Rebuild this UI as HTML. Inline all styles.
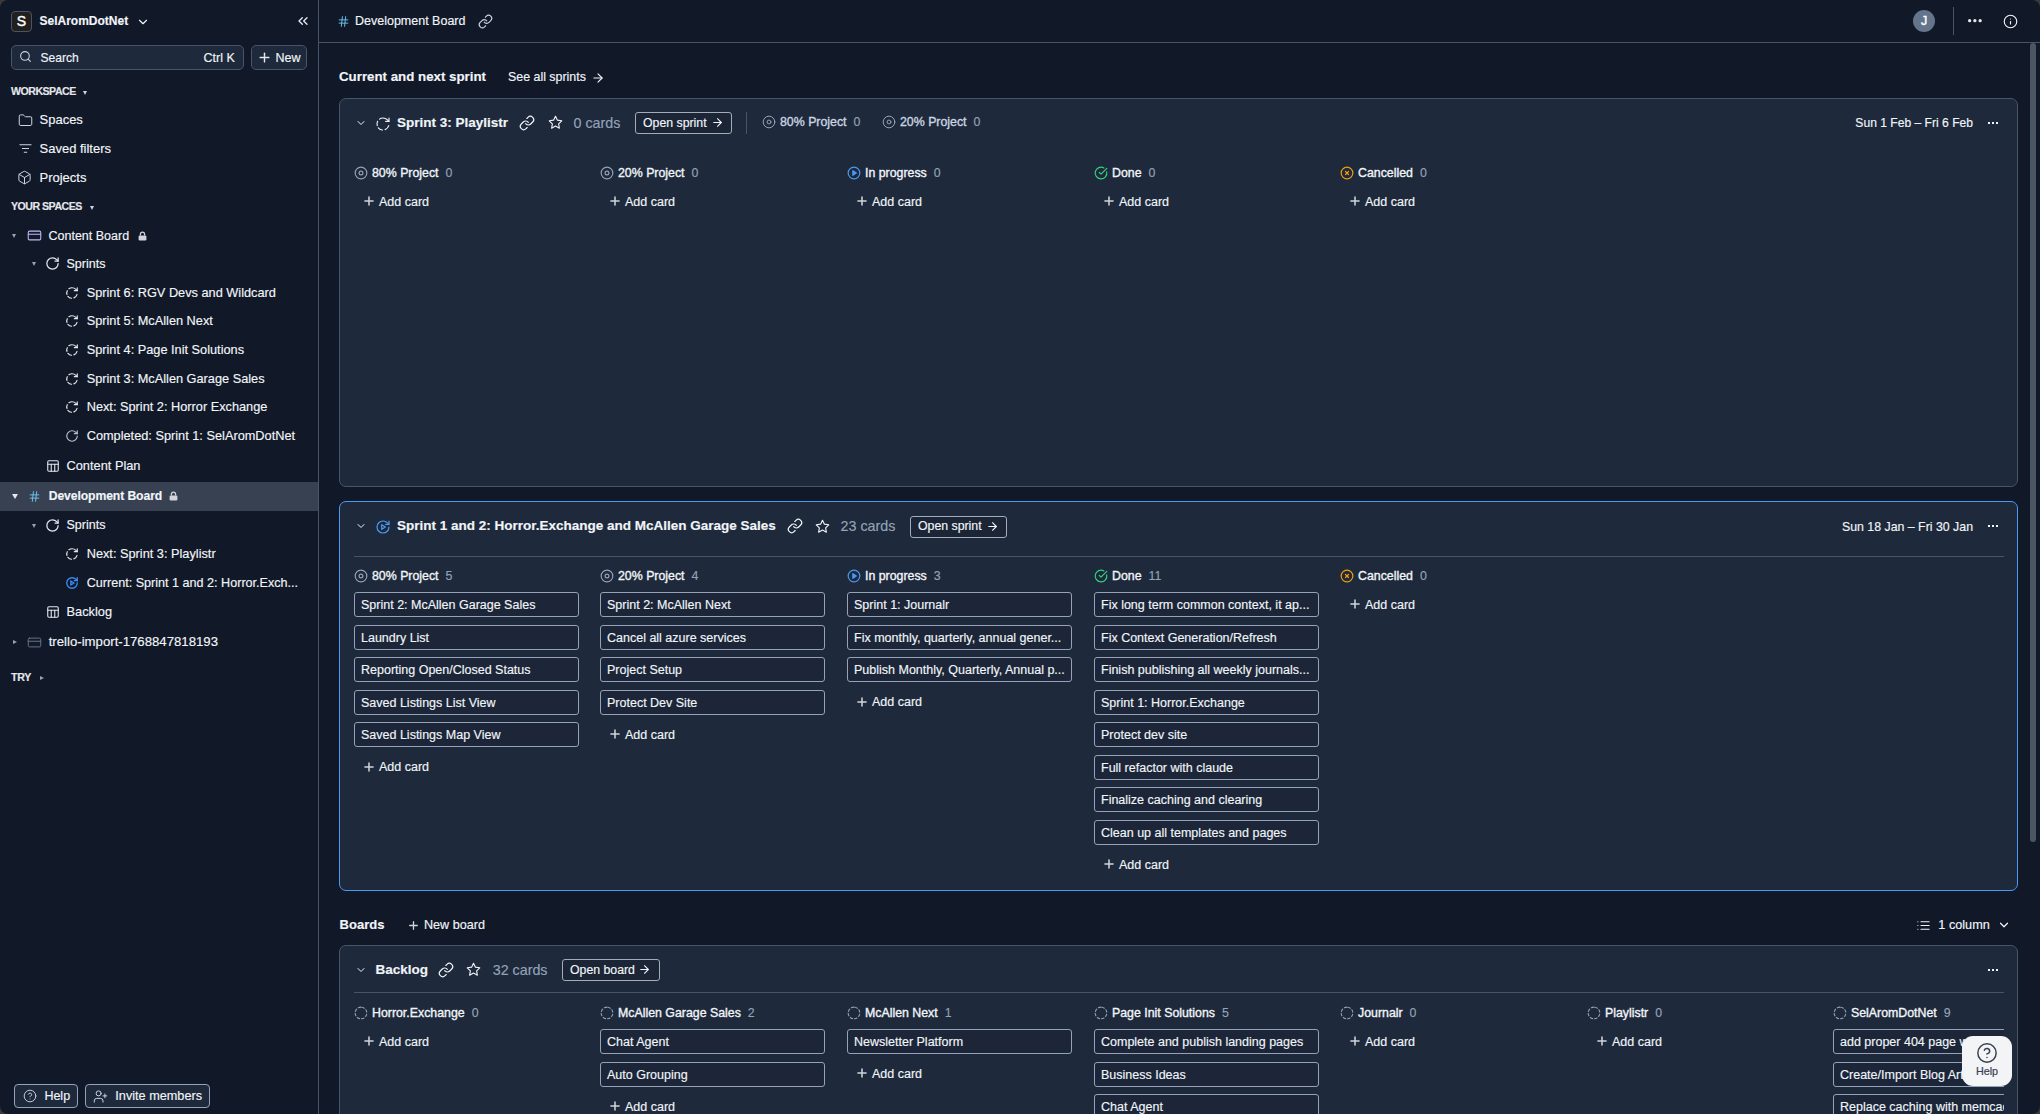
<!DOCTYPE html>
<html><head><meta charset="utf-8"><style>
html{margin:0;padding:0;background:#3a3a3a}body{margin:0;padding:0;border-radius:8px;}
body{width:2040px;height:1114px;overflow:hidden;background:#111827;position:relative;font-family:"Liberation Sans",sans-serif;}
.t{position:absolute;line-height:20px;white-space:nowrap;-webkit-text-stroke-width:0.15px;}
.b{position:absolute;box-sizing:border-box;}
.i{position:absolute;overflow:visible;}
.card{position:absolute;height:25px;box-sizing:border-box;border:1px solid #94a3b8;border-radius:3px;background:#1c2638;color:#f1f5f9;font-size:12.5px;line-height:24px;padding-left:6px;white-space:nowrap;overflow:hidden;-webkit-text-stroke-width:0.15px;}
.btn{position:absolute;box-sizing:border-box;border:1px solid #a3acb9;border-radius:3px;background:#1b2535}
.hd{font-size:12.35px;color:#f1f5f9;font-weight:400;-webkit-text-stroke-width:0.35px;}
.cnt{color:#94a3b8;font-weight:400;margin-left:7px;-webkit-text-stroke-width:0.15px;}
</style></head><body>
<div class="b" style="left:318px;top:0;width:1px;height:1114px;background:#475569"></div>
<div class="b" style="left:11px;top:11px;width:21px;height:21px;background:#221f1e;border:1px solid #475569;border-radius:4px;"></div>
<div class="t" style="left:11px;top:10.8px;font-size:14px;font-weight:400;color:#ffffff;width:21px;text-align:center;-webkit-text-stroke-width:0.4px">S</div>
<div class="t" style="left:39.5px;top:11.0px;font-size:12px;font-weight:700;color:#f1f5f9;">SelAromDotNet</div>
<svg class="i" style="left:135.5px;top:14.5px;color:#f1f5f9;" width="14" height="14" viewBox="0 0 24 24" fill="none" stroke="#f1f5f9" stroke-width="2" stroke-linecap="round" stroke-linejoin="round"><path d="m6 9 6 6 6-6"/></svg>
<svg class="i" style="left:294.5px;top:13.0px;color:#e2e8f0;" width="16" height="16" viewBox="0 0 24 24" fill="none" stroke="#e2e8f0" stroke-width="2" stroke-linecap="round" stroke-linejoin="round"><path d="m11 17-5-5 5-5"/><path d="m18 17-5-5 5-5"/></svg>
<div class="b" style="left:11px;top:45px;width:233px;height:25px;background:#1e293b;border:1px solid #475569;border-radius:5px;"></div>
<svg class="i" style="left:19px;top:50.0px;color:#cbd5e1;" width="13" height="13" viewBox="0 0 24 24" fill="none" stroke="#cbd5e1" stroke-width="2" stroke-linecap="round" stroke-linejoin="round"><circle cx="11" cy="11" r="8"/><path d="m21 21-4.3-4.3"/></svg>
<div class="t" style="left:40.5px;top:47.5px;font-size:12.1px;font-weight:400;color:#f1f5f9;">Search</div>
<div class="t" style="left:203.5px;top:47.5px;font-size:12.5px;font-weight:400;color:#f1f5f9;">Ctrl K</div>
<div class="b" style="left:251px;top:45px;width:56px;height:25px;background:#1e293b;border:1px solid #475569;border-radius:5px;"></div>
<svg class="i" style="left:257px;top:50.0px;color:#e5e7eb;" width="15" height="15" viewBox="0 0 24 24" fill="none" stroke="#e5e7eb" stroke-width="2.3" stroke-linecap="round" stroke-linejoin="round"><path d="M5 12h14"/><path d="M12 5v14"/></svg>
<div class="t" style="left:275.6px;top:47.5px;font-size:12.5px;font-weight:400;color:#f1f5f9;">New</div>
<div class="t" style="left:11px;top:81.0px;font-size:10.6px;font-weight:700;color:#e5e7eb;letter-spacing:-0.5px">WORKSPACE</div>
<div class="b" style="left:82.5px;top:90.5px;width:0;height:0;border-left:2.5px solid transparent;border-right:2.5px solid transparent;border-top:4px solid #cbd5e1"></div>
<svg class="i" style="left:17.5px;top:113.0px;color:#cbd5e1;" width="15" height="15" viewBox="0 0 24 24" fill="none" stroke="#cbd5e1" stroke-width="1.6" stroke-linecap="round" stroke-linejoin="round"><path d="M20 20a2 2 0 0 0 2-2V8a2 2 0 0 0-2-2h-7.9a2 2 0 0 1-1.69-.9L9.6 3.9A2 2 0 0 0 7.93 3H4a2 2 0 0 0-2 2v13a2 2 0 0 0 2 2Z"/></svg>
<div class="t" style="left:39.5px;top:109.5px;font-size:13px;font-weight:400;color:#f1f5f9;">Spaces</div>
<svg class="i" style="left:17.5px;top:141.0px;color:#cbd5e1;" width="15" height="15" viewBox="0 0 24 24" fill="none" stroke="#cbd5e1" stroke-width="1.6" stroke-linecap="round" stroke-linejoin="round"><path d="M3 6h18"/><path d="M7 12h10"/><path d="M10 18h4"/></svg>
<div class="t" style="left:39.5px;top:138.5px;font-size:13px;font-weight:400;color:#f1f5f9;">Saved filters</div>
<svg class="i" style="left:17px;top:170.0px;color:#cbd5e1;" width="15" height="15" viewBox="0 0 24 24" fill="none" stroke="#cbd5e1" stroke-width="1.6" stroke-linecap="round" stroke-linejoin="round"><path d="M21 8a2 2 0 0 0-1-1.73l-7-4a2 2 0 0 0-2 0l-7 4A2 2 0 0 0 3 8v8a2 2 0 0 0 1 1.73l7 4a2 2 0 0 0 2 0l7-4A2 2 0 0 0 21 16Z"/><path d="m3.3 7 8.7 5 8.7-5"/><path d="M12 22V12"/></svg>
<div class="t" style="left:39.5px;top:167.5px;font-size:13px;font-weight:400;color:#f1f5f9;">Projects</div>
<div class="t" style="left:11px;top:196.0px;font-size:10.6px;font-weight:700;color:#e5e7eb;letter-spacing:-0.5px">YOUR SPACES</div>
<div class="b" style="left:90px;top:205.5px;width:0;height:0;border-left:2.5px solid transparent;border-right:2.5px solid transparent;border-top:4px solid #cbd5e1"></div>
<div class="b" style="left:12px;top:234.0px;width:0;height:0;border-left:2.5px solid transparent;border-right:2.5px solid transparent;border-top:4px solid #9ca3af"></div>
<svg class="i" style="left:26.5px;top:228.0px;color:#c4b5fd;" width="15" height="15" viewBox="0 0 24 24" fill="none" stroke="#c4b5fd" stroke-width="1.7" stroke-linecap="round" stroke-linejoin="round"><rect width="20" height="14" x="2" y="5" rx="2"/><line x1="2" x2="22" y1="10" y2="10"/></svg>
<div class="t" style="left:48.5px;top:225.5px;font-size:12.5px;font-weight:400;color:#f1f5f9;">Content Board</div>
<svg class="i" style="left:138px;top:230.5px" width="9" height="10" viewBox="0 0 9 10"><path d="M2.4 4.6V3.2a2.1 2.1 0 0 1 4.2 0V4.6" fill="none" stroke="#d1d5db" stroke-width="1.2"/><rect x="0.6" y="4.4" width="7.8" height="5" rx="1.2" fill="#d1d5db"/></svg>
<div class="b" style="left:32px;top:262.0px;width:0;height:0;border-left:2.5px solid transparent;border-right:2.5px solid transparent;border-top:4px solid #9ca3af"></div>
<svg class="i" style="left:45px;top:256.0px;color:#e2e8f0;" width="15" height="15" viewBox="0 0 24 24" fill="none" stroke="#e2e8f0" stroke-width="2" stroke-linecap="round" stroke-linejoin="round"><path d="M21 12a9 9 0 1 1-9-9c2.52 0 4.93 1 6.74 2.74L21 8"/><path d="M21 3v5h-5"/></svg>
<div class="t" style="left:66.5px;top:253.5px;font-size:12.5px;font-weight:400;color:#f1f5f9;">Sprints</div>
<svg class="i" style="left:64.8px;top:285.5px;color:#e2e8f0;" width="14" height="14" viewBox="0 0 24 24" fill="none" stroke="#e2e8f0" stroke-width="2" stroke-linecap="round" stroke-linejoin="round"><path d="M20.65 14.48A9 9 0 0 1 15.23 20.40M11.22 20.97A9 9 0 0 1 5.01 17.66M3.31 14.33A9 9 0 0 1 3.91 8.05M6.71 4.72A9 9 0 0 1 12.00 3.00c2.52 0 4.93 1 6.74 2.74L21 8"/><path d="M21 3v5h-5"/></svg>
<div class="t" style="left:86.7px;top:282.5px;font-size:12.75px;font-weight:400;color:#f1f5f9;">Sprint 6: RGV Devs and Wildcard</div>
<svg class="i" style="left:64.8px;top:314.0px;color:#e2e8f0;" width="14" height="14" viewBox="0 0 24 24" fill="none" stroke="#e2e8f0" stroke-width="2" stroke-linecap="round" stroke-linejoin="round"><path d="M20.65 14.48A9 9 0 0 1 15.23 20.40M11.22 20.97A9 9 0 0 1 5.01 17.66M3.31 14.33A9 9 0 0 1 3.91 8.05M6.71 4.72A9 9 0 0 1 12.00 3.00c2.52 0 4.93 1 6.74 2.74L21 8"/><path d="M21 3v5h-5"/></svg>
<div class="t" style="left:86.7px;top:311.0px;font-size:12.75px;font-weight:400;color:#f1f5f9;">Sprint 5: McAllen Next</div>
<svg class="i" style="left:64.8px;top:343.0px;color:#e2e8f0;" width="14" height="14" viewBox="0 0 24 24" fill="none" stroke="#e2e8f0" stroke-width="2" stroke-linecap="round" stroke-linejoin="round"><path d="M20.65 14.48A9 9 0 0 1 15.23 20.40M11.22 20.97A9 9 0 0 1 5.01 17.66M3.31 14.33A9 9 0 0 1 3.91 8.05M6.71 4.72A9 9 0 0 1 12.00 3.00c2.52 0 4.93 1 6.74 2.74L21 8"/><path d="M21 3v5h-5"/></svg>
<div class="t" style="left:86.7px;top:340.0px;font-size:12.75px;font-weight:400;color:#f1f5f9;">Sprint 4: Page Init Solutions</div>
<svg class="i" style="left:64.8px;top:371.5px;color:#e2e8f0;" width="14" height="14" viewBox="0 0 24 24" fill="none" stroke="#e2e8f0" stroke-width="2" stroke-linecap="round" stroke-linejoin="round"><path d="M20.65 14.48A9 9 0 0 1 15.23 20.40M11.22 20.97A9 9 0 0 1 5.01 17.66M3.31 14.33A9 9 0 0 1 3.91 8.05M6.71 4.72A9 9 0 0 1 12.00 3.00c2.52 0 4.93 1 6.74 2.74L21 8"/><path d="M21 3v5h-5"/></svg>
<div class="t" style="left:86.7px;top:368.5px;font-size:12.75px;font-weight:400;color:#f1f5f9;">Sprint 3: McAllen Garage Sales</div>
<svg class="i" style="left:64.8px;top:400.0px;color:#e2e8f0;" width="14" height="14" viewBox="0 0 24 24" fill="none" stroke="#e2e8f0" stroke-width="2" stroke-linecap="round" stroke-linejoin="round"><path d="M20.65 14.48A9 9 0 0 1 15.23 20.40M11.22 20.97A9 9 0 0 1 5.01 17.66M3.31 14.33A9 9 0 0 1 3.91 8.05M6.71 4.72A9 9 0 0 1 12.00 3.00c2.52 0 4.93 1 6.74 2.74L21 8"/><path d="M21 3v5h-5"/></svg>
<div class="t" style="left:86.7px;top:397.0px;font-size:12.75px;font-weight:400;color:#f1f5f9;">Next: Sprint 2: Horror Exchange</div>
<svg class="i" style="left:64.8px;top:429.0px;color:#b8c0cc;" width="14" height="14" viewBox="0 0 24 24" fill="none" stroke="#b8c0cc" stroke-width="2" stroke-linecap="round" stroke-linejoin="round"><path d="M21 12a9 9 0 1 1-9-9c2.52 0 4.93 1 6.74 2.74L21 8"/><path d="M21 3v5h-5"/></svg>
<div class="t" style="left:86.7px;top:426.0px;font-size:12.75px;font-weight:400;color:#f1f5f9;">Completed: Sprint 1: SelAromDotNet</div>
<svg class="i" style="left:45.5px;top:459.0px;color:#e2e8f0;" width="14" height="14" viewBox="0 0 24 24" fill="none" stroke="#e2e8f0" stroke-width="1.9" stroke-linecap="round" stroke-linejoin="round"><rect width="18" height="18" x="3" y="3" rx="2"/><path d="M3 9h18"/><path d="M9 9v12"/><path d="M15 9v12"/></svg>
<div class="t" style="left:66.5px;top:456.0px;font-size:12.8px;font-weight:400;color:#f1f5f9;">Content Plan</div>
<div class="b" style="left:0px;top:482px;width:318px;height:29px;background:#374151;border-radius:0px;"></div>
<div class="b" style="left:11.5px;top:494.25px;width:0;height:0;border-left:3.5px solid transparent;border-right:3.5px solid transparent;border-top:5.5px solid #e2e8f0"></div>
<svg class="i" style="left:27.5px;top:489.5px;color:#6ec8f5;" width="13" height="13" viewBox="0 0 24 24" fill="none" stroke="#6ec8f5" stroke-width="1.7" stroke-linecap="round" stroke-linejoin="round"><line x1="4" x2="20" y1="9" y2="9"/><line x1="4" x2="20" y1="15" y2="15"/><line x1="10" x2="8" y1="3" y2="21"/><line x1="16" x2="14" y1="3" y2="21"/></svg>
<div class="t" style="left:48.7px;top:485.5px;font-size:12.2px;font-weight:700;color:#f1f5f9;letter-spacing:-0.1px">Development Board</div>
<svg class="i" style="left:168.5px;top:491px" width="9" height="10" viewBox="0 0 9 10"><path d="M2.4 4.6V3.2a2.1 2.1 0 0 1 4.2 0V4.6" fill="none" stroke="#d1d5db" stroke-width="1.2"/><rect x="0.6" y="4.4" width="7.8" height="5" rx="1.2" fill="#d1d5db"/></svg>
<div class="b" style="left:31.5px;top:523.5px;width:0;height:0;border-left:2.5px solid transparent;border-right:2.5px solid transparent;border-top:4px solid #9ca3af"></div>
<svg class="i" style="left:45px;top:517.5px;color:#e2e8f0;" width="15" height="15" viewBox="0 0 24 24" fill="none" stroke="#e2e8f0" stroke-width="2" stroke-linecap="round" stroke-linejoin="round"><path d="M21 12a9 9 0 1 1-9-9c2.52 0 4.93 1 6.74 2.74L21 8"/><path d="M21 3v5h-5"/></svg>
<div class="t" style="left:66.5px;top:515.0px;font-size:12.5px;font-weight:400;color:#f1f5f9;">Sprints</div>
<svg class="i" style="left:64.8px;top:547.0px;color:#e2e8f0;" width="14" height="14" viewBox="0 0 24 24" fill="none" stroke="#e2e8f0" stroke-width="2" stroke-linecap="round" stroke-linejoin="round"><path d="M20.65 14.48A9 9 0 0 1 15.23 20.40M11.22 20.97A9 9 0 0 1 5.01 17.66M3.31 14.33A9 9 0 0 1 3.91 8.05M6.71 4.72A9 9 0 0 1 12.00 3.00c2.52 0 4.93 1 6.74 2.74L21 8"/><path d="M21 3v5h-5"/></svg>
<div class="t" style="left:86.7px;top:544.0px;font-size:12.75px;font-weight:400;color:#f1f5f9;">Next: Sprint 3: Playlistr</div>
<svg class="i" style="left:64.8px;top:576.0px;color:#3b8cf5;" width="14" height="14" viewBox="0 0 24 24" fill="none" stroke="#3b8cf5" stroke-width="2.3" stroke-linecap="round" stroke-linejoin="round"><path d="M21 12a9 9 0 1 1-9-9c2.52 0 4.93 1 6.74 2.74L21 8"/><path d="M21 3v5h-5"/><path d="M10 8.5v7l5.5-3.5z" /></svg>
<div class="t" style="left:86.7px;top:573.0px;font-size:12.6px;font-weight:400;color:#f1f5f9;width:212px;white-space:nowrap;overflow:hidden">Current: Sprint 1 and 2: Horror.Exch...</div>
<svg class="i" style="left:45.5px;top:605.0px;color:#e2e8f0;" width="14" height="14" viewBox="0 0 24 24" fill="none" stroke="#e2e8f0" stroke-width="1.9" stroke-linecap="round" stroke-linejoin="round"><rect width="18" height="18" x="3" y="3" rx="2"/><path d="M3 9h18"/><path d="M9 9v12"/><path d="M15 9v12"/></svg>
<div class="t" style="left:66.5px;top:602.0px;font-size:12.8px;font-weight:400;color:#f1f5f9;">Backlog</div>
<div class="b" style="left:12.5px;top:639.5px;width:0;height:0;border-top:2.5px solid transparent;border-bottom:2.5px solid transparent;border-left:4px solid #9ca3af"></div>
<svg class="i" style="left:26.5px;top:634.5px;color:#64748b;" width="15" height="15" viewBox="0 0 24 24" fill="none" stroke="#64748b" stroke-width="1.6" stroke-linecap="round" stroke-linejoin="round"><rect width="20" height="14" x="2" y="5" rx="2"/><line x1="2" x2="22" y1="10" y2="10"/></svg>
<div class="t" style="left:48.7px;top:632.0px;font-size:13.2px;font-weight:400;color:#f1f5f9;">trello-import-1768847818193</div>
<div class="t" style="left:11px;top:667.0px;font-size:10.6px;font-weight:700;color:#e5e7eb;letter-spacing:-0.3px">TRY</div>
<div class="b" style="left:39.5px;top:675.5px;width:0;height:0;border-top:2.5px solid transparent;border-bottom:2.5px solid transparent;border-left:4px solid #9ca3af"></div>
<div class="b" style="left:14px;top:1084px;width:64px;height:24px;background:#1e293b;border:1px solid #94a3b8;border-radius:4px;"></div>
<svg class="i" style="left:22.5px;top:1089.0px;color:#cbd5e1;" width="14" height="14" viewBox="0 0 24 24" fill="none" stroke="#cbd5e1" stroke-width="1.6" stroke-linecap="round" stroke-linejoin="round"><circle cx="12" cy="12" r="10"/><path d="M9.09 9a3 3 0 0 1 5.83 1c0 2-3 3-3 3"/><path d="M12 17h.01"/></svg>
<div class="t" style="left:44.4px;top:1086.0px;font-size:12.5px;font-weight:400;color:#f1f5f9;">Help</div>
<div class="b" style="left:85px;top:1084px;width:125px;height:24px;background:#1e293b;border:1px solid #94a3b8;border-radius:4px;"></div>
<svg class="i" style="left:92.5px;top:1088.5px;color:#cbd5e1;" width="15" height="15" viewBox="0 0 24 24" fill="none" stroke="#cbd5e1" stroke-width="1.6" stroke-linecap="round" stroke-linejoin="round"><path d="M16 21v-2a4 4 0 0 0-4-4H6a4 4 0 0 0-4 4v2"/><circle cx="9" cy="7" r="4"/><line x1="19" x2="19" y1="8" y2="14"/><line x1="22" x2="16" y1="11" y2="11"/></svg>
<div class="t" style="left:115.3px;top:1086.0px;font-size:12.7px;font-weight:400;color:#f1f5f9;">Invite members</div>
<div class="b" style="left:319px;top:42px;width:1721px;height:1px;background:#475569"></div>
<svg class="i" style="left:336.5px;top:14.5px;color:#6ec8f5;" width="13" height="13" viewBox="0 0 24 24" fill="none" stroke="#6ec8f5" stroke-width="1.7" stroke-linecap="round" stroke-linejoin="round"><line x1="4" x2="20" y1="9" y2="9"/><line x1="4" x2="20" y1="15" y2="15"/><line x1="10" x2="8" y1="3" y2="21"/><line x1="16" x2="14" y1="3" y2="21"/></svg>
<div class="t" style="left:355px;top:11.0px;font-size:12.5px;font-weight:400;color:#f1f5f9;">Development Board</div>
<svg class="i" style="left:477.5px;top:13.5px;color:#cbd5e1;" width="15" height="15" viewBox="0 0 24 24" fill="none" stroke="#cbd5e1" stroke-width="1.8" stroke-linecap="round" stroke-linejoin="round"><path d="M10 13a5 5 0 0 0 7.54.54l3-3a5 5 0 0 0-7.07-7.07l-1.72 1.71"/><path d="M14 11a5 5 0 0 0-7.54-.54l-3 3a5 5 0 0 0 7.07 7.07l1.71-1.71"/></svg>
<div class="b" style="left:1913px;top:10px;width:22px;height:22px;border-radius:50%;background:#64748b"></div>
<div class="t" style="left:1913px;top:11.0px;font-size:12.5px;font-weight:400;color:#ffffff;width:22px;text-align:center;-webkit-text-stroke-width:0.4px">J</div>
<div class="b" style="left:1953px;top:7px;width:1px;height:28px;background:#475569"></div>
<svg class="i" style="left:1968.1px;top:19.25px" width="13.8" height="3.3" viewBox="0 0 13.8 3.3"><circle cx="1.65" cy="1.65" r="1.65" fill="#e5e7eb"/><circle cx="6.9" cy="1.65" r="1.65" fill="#e5e7eb"/><circle cx="12.15" cy="1.65" r="1.65" fill="#e5e7eb"/></svg>
<svg class="i" style="left:2003.3px;top:13.5px;color:#f1f5f9;" width="15" height="15" viewBox="0 0 24 24" fill="none" stroke="#f1f5f9" stroke-width="1.8" stroke-linecap="round" stroke-linejoin="round"><circle cx="12" cy="12" r="10"/><path d="M12 16v-4"/><path d="M12 8h.01"/></svg>
<div class="b" style="left:2030px;top:43px;width:6px;height:799px;border-radius:3px;background:#4b5563"></div>
<div class="t" style="left:339px;top:67.0px;font-size:13.3px;font-weight:700;color:#f1f5f9;">Current and next sprint</div>
<div class="t" style="left:508px;top:67.0px;font-size:12.4px;font-weight:400;color:#f1f5f9;">See all sprints</div>
<svg class="i" style="left:590.5px;top:70.5px;color:#f1f5f9;" width="14" height="14" viewBox="0 0 24 24" fill="none" stroke="#f1f5f9" stroke-width="2" stroke-linecap="round" stroke-linejoin="round"><path d="M5 12h14"/><path d="m12 5 7 7-7 7"/></svg>
<div class="b" style="left:339px;top:98px;width:1679px;height:389px;background:#1e293b;border:1px solid #475569;border-radius:7px;"></div>
<svg class="i" style="left:355px;top:116.5px;color:#f1f5f9;" width="12" height="12" viewBox="0 0 24 24" fill="none" stroke="#f1f5f9" stroke-width="2" stroke-linecap="round" stroke-linejoin="round"><path d="m6 9 6 6 6-6"/></svg>
<svg class="i" style="left:375px;top:115.5px;color:#f1f5f9;" width="16" height="16" viewBox="0 0 24 24" fill="none" stroke="#f1f5f9" stroke-width="1.7" stroke-linecap="round" stroke-linejoin="round"><path d="M20.65 14.48A9 9 0 0 1 15.23 20.40M11.22 20.97A9 9 0 0 1 5.01 17.66M3.31 14.33A9 9 0 0 1 3.91 8.05M6.71 4.72A9 9 0 0 1 12.00 3.00c2.52 0 4.93 1 6.74 2.74L21 8"/><path d="M21 3v5h-5"/></svg>
<div class="t" style="left:397px;top:112.5px;font-size:13.5px;font-weight:700;color:#f1f5f9;">Sprint 3: Playlistr</div>
<svg class="i" style="left:519px;top:114.5px;color:#f1f5f9;" width="16" height="16" viewBox="0 0 24 24" fill="none" stroke="#f1f5f9" stroke-width="1.8" stroke-linecap="round" stroke-linejoin="round"><path d="M10 13a5 5 0 0 0 7.54.54l3-3a5 5 0 0 0-7.07-7.07l-1.72 1.71"/><path d="M14 11a5 5 0 0 0-7.54-.54l-3 3a5 5 0 0 0 7.07 7.07l1.71-1.71"/></svg>
<svg class="i" style="left:547.5px;top:115.0px;color:#f1f5f9;" width="15" height="15" viewBox="0 0 24 24" fill="none" stroke="#f1f5f9" stroke-width="1.8" stroke-linecap="round" stroke-linejoin="round"><polygon points="12 2 15.09 8.26 22 9.27 17 14.14 18.18 21.02 12 17.77 5.82 21.02 7 14.14 2 9.27 8.91 8.26 12 2"/></svg>
<div class="t" style="left:573.5px;top:112.5px;font-size:14.3px;font-weight:400;color:#94a3b8;">0 cards</div>
<div class="btn" style="left:635px;top:112px;width:97px;height:22px"></div>
<div class="t" style="left:643px;top:112.5px;font-size:12.3px;font-weight:400;color:#f1f5f9;">Open sprint</div>
<svg class="i" style="left:711px;top:116.0px;color:#f1f5f9;" width="13" height="13" viewBox="0 0 24 24" fill="none" stroke="#f1f5f9" stroke-width="2" stroke-linecap="round" stroke-linejoin="round"><path d="M5 12h14"/><path d="m12 5 7 7-7 7"/></svg>
<div class="b" style="left:746px;top:112px;width:1px;height:22px;background:#475569"></div>
<svg class="i" style="left:761.5px;top:115.0px;color:#94a3b8;" width="14" height="14" viewBox="0 0 24 24" fill="none" stroke="#94a3b8" stroke-width="1.7" stroke-linecap="round" stroke-linejoin="round"><circle cx="12" cy="12" r="10"/><circle cx="12" cy="12" r="3.3"/></svg>
<div class="t hd" style="left:780px;top:112px;color:#cbd5e1">80% Project<span class="cnt">0</span></div>
<svg class="i" style="left:881.5px;top:115.0px;color:#94a3b8;" width="14" height="14" viewBox="0 0 24 24" fill="none" stroke="#94a3b8" stroke-width="1.7" stroke-linecap="round" stroke-linejoin="round"><circle cx="12" cy="12" r="10"/><circle cx="12" cy="12" r="3.3"/></svg>
<div class="t hd" style="left:900px;top:112px;color:#cbd5e1">20% Project<span class="cnt">0</span></div>
<div class="t" style="left:1855px;top:113.3px;font-size:12.1px;font-weight:400;color:#f1f5f9;left:auto;right:67px">Sun 1 Feb – Fri 6 Feb</div>
<div class="b" style="left:1988px;top:122px;width:2px;height:2px;background:#f1f5f9"></div>
<div class="b" style="left:1992px;top:122px;width:2px;height:2px;background:#f1f5f9"></div>
<div class="b" style="left:1996px;top:122px;width:2px;height:2px;background:#f1f5f9"></div>
<svg class="i" style="left:353.5px;top:165.6px;color:#94a3b8;" width="14" height="14" viewBox="0 0 24 24" fill="none" stroke="#94a3b8" stroke-width="2.0" stroke-linecap="round" stroke-linejoin="round"><circle cx="12" cy="12" r="10"/><circle cx="12" cy="12" r="3.3"/></svg>
<div class="t hd" style="left:372px;top:162.6px">80% Project<span class="cnt">0</span></div>
<svg class="i" style="left:362.1px;top:194.0px;color:#d1d5db;" width="14" height="14" viewBox="0 0 24 24" fill="none" stroke="#d1d5db" stroke-width="2.6" stroke-linecap="round" stroke-linejoin="round"><path d="M5 12h14"/><path d="M12 5v14"/></svg>
<div class="t" style="left:379px;top:191.6px;font-size:12.5px;font-weight:400;color:#f1f5f9;">Add card</div>
<svg class="i" style="left:599.5px;top:165.6px;color:#94a3b8;" width="14" height="14" viewBox="0 0 24 24" fill="none" stroke="#94a3b8" stroke-width="2.0" stroke-linecap="round" stroke-linejoin="round"><circle cx="12" cy="12" r="10"/><circle cx="12" cy="12" r="3.3"/></svg>
<div class="t hd" style="left:618px;top:162.6px">20% Project<span class="cnt">0</span></div>
<svg class="i" style="left:608.1px;top:194.0px;color:#d1d5db;" width="14" height="14" viewBox="0 0 24 24" fill="none" stroke="#d1d5db" stroke-width="2.6" stroke-linecap="round" stroke-linejoin="round"><path d="M5 12h14"/><path d="M12 5v14"/></svg>
<div class="t" style="left:625px;top:191.6px;font-size:12.5px;font-weight:400;color:#f1f5f9;">Add card</div>
<svg class="i" style="left:846.5px;top:165.6px;color:#4a9af5;" width="14" height="14" viewBox="0 0 24 24" fill="none" stroke="#4a9af5" stroke-width="2.0" stroke-linecap="round" stroke-linejoin="round"><circle cx="12" cy="12" r="10"/><polygon points="10 8 16 12 10 16 10 8" fill="currentColor"/></svg>
<div class="t hd" style="left:865px;top:162.6px">In progress<span class="cnt">0</span></div>
<svg class="i" style="left:855.1px;top:194.0px;color:#d1d5db;" width="14" height="14" viewBox="0 0 24 24" fill="none" stroke="#d1d5db" stroke-width="2.6" stroke-linecap="round" stroke-linejoin="round"><path d="M5 12h14"/><path d="M12 5v14"/></svg>
<div class="t" style="left:872px;top:191.6px;font-size:12.5px;font-weight:400;color:#f1f5f9;">Add card</div>
<svg class="i" style="left:1093.5px;top:165.6px;color:#34d27f;" width="14" height="14" viewBox="0 0 24 24" fill="none" stroke="#34d27f" stroke-width="2.0" stroke-linecap="round" stroke-linejoin="round"><path d="M21.801 10A10 10 0 1 1 17 3.335"/><path d="m9 11 3 3L22 4"/></svg>
<div class="t hd" style="left:1112px;top:162.6px">Done<span class="cnt">0</span></div>
<svg class="i" style="left:1102.1px;top:194.0px;color:#d1d5db;" width="14" height="14" viewBox="0 0 24 24" fill="none" stroke="#d1d5db" stroke-width="2.6" stroke-linecap="round" stroke-linejoin="round"><path d="M5 12h14"/><path d="M12 5v14"/></svg>
<div class="t" style="left:1119px;top:191.6px;font-size:12.5px;font-weight:400;color:#f1f5f9;">Add card</div>
<svg class="i" style="left:1339.5px;top:165.6px;color:#f59e0b;" width="14" height="14" viewBox="0 0 24 24" fill="none" stroke="#f59e0b" stroke-width="2.0" stroke-linecap="round" stroke-linejoin="round"><circle cx="12" cy="12" r="10"/><path d="m14.6 9.4-5.2 5.2"/><path d="m9.4 9.4 5.2 5.2"/></svg>
<div class="t hd" style="left:1358px;top:162.6px">Cancelled<span class="cnt">0</span></div>
<svg class="i" style="left:1348.1px;top:194.0px;color:#d1d5db;" width="14" height="14" viewBox="0 0 24 24" fill="none" stroke="#d1d5db" stroke-width="2.6" stroke-linecap="round" stroke-linejoin="round"><path d="M5 12h14"/><path d="M12 5v14"/></svg>
<div class="t" style="left:1365px;top:191.6px;font-size:12.5px;font-weight:400;color:#f1f5f9;">Add card</div>
<div class="b" style="left:339px;top:501px;width:1679px;height:390px;background:#1e293b;border:1px solid #4a9af5;border-radius:7px;"></div>
<svg class="i" style="left:355px;top:520.3px;color:#f1f5f9;" width="12" height="12" viewBox="0 0 24 24" fill="none" stroke="#f1f5f9" stroke-width="2" stroke-linecap="round" stroke-linejoin="round"><path d="m6 9 6 6 6-6"/></svg>
<svg class="i" style="left:375px;top:518.5px;color:#4a9af5;" width="16" height="16" viewBox="0 0 24 24" fill="none" stroke="#4a9af5" stroke-width="1.8" stroke-linecap="round" stroke-linejoin="round"><path d="M21 12a9 9 0 1 1-9-9c2.52 0 4.93 1 6.74 2.74L21 8"/><path d="M21 3v5h-5"/><path d="M10 8.5v7l5.5-3.5z" /></svg>
<div class="t" style="left:397px;top:516.3px;font-size:13.5px;font-weight:700;color:#f1f5f9;">Sprint 1 and 2: Horror.Exchange and McAllen Garage Sales</div>
<svg class="i" style="left:786.5px;top:518.3px;color:#f1f5f9;" width="16" height="16" viewBox="0 0 24 24" fill="none" stroke="#f1f5f9" stroke-width="1.8" stroke-linecap="round" stroke-linejoin="round"><path d="M10 13a5 5 0 0 0 7.54.54l3-3a5 5 0 0 0-7.07-7.07l-1.72 1.71"/><path d="M14 11a5 5 0 0 0-7.54-.54l-3 3a5 5 0 0 0 7.07 7.07l1.71-1.71"/></svg>
<svg class="i" style="left:815px;top:518.8px;color:#f1f5f9;" width="15" height="15" viewBox="0 0 24 24" fill="none" stroke="#f1f5f9" stroke-width="1.8" stroke-linecap="round" stroke-linejoin="round"><polygon points="12 2 15.09 8.26 22 9.27 17 14.14 18.18 21.02 12 17.77 5.82 21.02 7 14.14 2 9.27 8.91 8.26 12 2"/></svg>
<div class="t" style="left:840.6px;top:516.3px;font-size:14.3px;font-weight:400;color:#94a3b8;">23 cards</div>
<div class="btn" style="left:910px;top:516px;width:97px;height:22px"></div>
<div class="t" style="left:918px;top:516.3px;font-size:12.3px;font-weight:400;color:#f1f5f9;">Open sprint</div>
<svg class="i" style="left:986px;top:519.8px;color:#f1f5f9;" width="13" height="13" viewBox="0 0 24 24" fill="none" stroke="#f1f5f9" stroke-width="2" stroke-linecap="round" stroke-linejoin="round"><path d="M5 12h14"/><path d="m12 5 7 7-7 7"/></svg>
<div class="t" style="left:1841px;top:516.8px;font-size:12.35px;font-weight:400;color:#f1f5f9;left:auto;right:67px">Sun 18 Jan – Fri 30 Jan</div>
<div class="b" style="left:1988px;top:525px;width:2px;height:2px;background:#f1f5f9"></div>
<div class="b" style="left:1992px;top:525px;width:2px;height:2px;background:#f1f5f9"></div>
<div class="b" style="left:1996px;top:525px;width:2px;height:2px;background:#f1f5f9"></div>
<div class="b" style="left:354px;top:556px;width:1650px;height:1px;background:#475569"></div>
<svg class="i" style="left:353.5px;top:568.7px;color:#94a3b8;" width="14" height="14" viewBox="0 0 24 24" fill="none" stroke="#94a3b8" stroke-width="2.0" stroke-linecap="round" stroke-linejoin="round"><circle cx="12" cy="12" r="10"/><circle cx="12" cy="12" r="3.3"/></svg>
<div class="t hd" style="left:372px;top:565.7px">80% Project<span class="cnt">5</span></div>
<svg class="i" style="left:599.5px;top:568.7px;color:#94a3b8;" width="14" height="14" viewBox="0 0 24 24" fill="none" stroke="#94a3b8" stroke-width="2.0" stroke-linecap="round" stroke-linejoin="round"><circle cx="12" cy="12" r="10"/><circle cx="12" cy="12" r="3.3"/></svg>
<div class="t hd" style="left:618px;top:565.7px">20% Project<span class="cnt">4</span></div>
<svg class="i" style="left:846.5px;top:568.7px;color:#4a9af5;" width="14" height="14" viewBox="0 0 24 24" fill="none" stroke="#4a9af5" stroke-width="2.0" stroke-linecap="round" stroke-linejoin="round"><circle cx="12" cy="12" r="10"/><polygon points="10 8 16 12 10 16 10 8" fill="currentColor"/></svg>
<div class="t hd" style="left:865px;top:565.7px">In progress<span class="cnt">3</span></div>
<svg class="i" style="left:1093.5px;top:568.7px;color:#34d27f;" width="14" height="14" viewBox="0 0 24 24" fill="none" stroke="#34d27f" stroke-width="2.0" stroke-linecap="round" stroke-linejoin="round"><path d="M21.801 10A10 10 0 1 1 17 3.335"/><path d="m9 11 3 3L22 4"/></svg>
<div class="t hd" style="left:1112px;top:565.7px">Done<span class="cnt">11</span></div>
<svg class="i" style="left:1339.5px;top:568.7px;color:#f59e0b;" width="14" height="14" viewBox="0 0 24 24" fill="none" stroke="#f59e0b" stroke-width="2.0" stroke-linecap="round" stroke-linejoin="round"><circle cx="12" cy="12" r="10"/><path d="m14.6 9.4-5.2 5.2"/><path d="m9.4 9.4 5.2 5.2"/></svg>
<div class="t hd" style="left:1358px;top:565.7px">Cancelled<span class="cnt">0</span></div>
<div class="card" style="left:354px;top:592px;width:225px">Sprint 2: McAllen Garage Sales</div>
<div class="card" style="left:354px;top:625px;width:225px">Laundry List</div>
<div class="card" style="left:354px;top:657px;width:225px">Reporting Open/Closed Status</div>
<div class="card" style="left:354px;top:690px;width:225px">Saved Listings List View</div>
<div class="card" style="left:354px;top:722px;width:225px">Saved Listings Map View</div>
<svg class="i" style="left:362.1px;top:759.6px;color:#d1d5db;" width="14" height="14" viewBox="0 0 24 24" fill="none" stroke="#d1d5db" stroke-width="2.6" stroke-linecap="round" stroke-linejoin="round"><path d="M5 12h14"/><path d="M12 5v14"/></svg>
<div class="t" style="left:379px;top:757.2px;font-size:12.5px;font-weight:400;color:#f1f5f9;">Add card</div>
<div class="card" style="left:600px;top:592px;width:225px">Sprint 2: McAllen Next</div>
<div class="card" style="left:600px;top:625px;width:225px">Cancel all azure services</div>
<div class="card" style="left:600px;top:657px;width:225px">Project Setup</div>
<div class="card" style="left:600px;top:690px;width:225px">Protect Dev Site</div>
<svg class="i" style="left:608.1px;top:727.1px;color:#d1d5db;" width="14" height="14" viewBox="0 0 24 24" fill="none" stroke="#d1d5db" stroke-width="2.6" stroke-linecap="round" stroke-linejoin="round"><path d="M5 12h14"/><path d="M12 5v14"/></svg>
<div class="t" style="left:625px;top:724.7px;font-size:12.5px;font-weight:400;color:#f1f5f9;">Add card</div>
<div class="card" style="left:847px;top:592px;width:225px">Sprint 1: Journalr</div>
<div class="card" style="left:847px;top:625px;width:225px">Fix monthly, quarterly, annual gener...</div>
<div class="card" style="left:847px;top:657px;width:225px">Publish Monthly, Quarterly, Annual p...</div>
<svg class="i" style="left:855.1px;top:694.6px;color:#d1d5db;" width="14" height="14" viewBox="0 0 24 24" fill="none" stroke="#d1d5db" stroke-width="2.6" stroke-linecap="round" stroke-linejoin="round"><path d="M5 12h14"/><path d="M12 5v14"/></svg>
<div class="t" style="left:872px;top:692.2px;font-size:12.5px;font-weight:400;color:#f1f5f9;">Add card</div>
<div class="card" style="left:1094px;top:592px;width:225px">Fix long term common context, it ap...</div>
<div class="card" style="left:1094px;top:625px;width:225px">Fix Context Generation/Refresh</div>
<div class="card" style="left:1094px;top:657px;width:225px">Finish publishing all weekly journals...</div>
<div class="card" style="left:1094px;top:690px;width:225px">Sprint 1: Horror.Exchange</div>
<div class="card" style="left:1094px;top:722px;width:225px">Protect dev site</div>
<div class="card" style="left:1094px;top:755px;width:225px">Full refactor with claude</div>
<div class="card" style="left:1094px;top:787px;width:225px">Finalize caching and clearing</div>
<div class="card" style="left:1094px;top:820px;width:225px">Clean up all templates and pages</div>
<svg class="i" style="left:1102.1px;top:857.1px;color:#d1d5db;" width="14" height="14" viewBox="0 0 24 24" fill="none" stroke="#d1d5db" stroke-width="2.6" stroke-linecap="round" stroke-linejoin="round"><path d="M5 12h14"/><path d="M12 5v14"/></svg>
<div class="t" style="left:1119px;top:854.7px;font-size:12.5px;font-weight:400;color:#f1f5f9;">Add card</div>
<svg class="i" style="left:1348.1px;top:597.1px;color:#d1d5db;" width="14" height="14" viewBox="0 0 24 24" fill="none" stroke="#d1d5db" stroke-width="2.6" stroke-linecap="round" stroke-linejoin="round"><path d="M5 12h14"/><path d="M12 5v14"/></svg>
<div class="t" style="left:1365px;top:594.7px;font-size:12.5px;font-weight:400;color:#f1f5f9;">Add card</div>
<div class="t" style="left:339.6px;top:915.0px;font-size:13px;font-weight:700;color:#f1f5f9;">Boards</div>
<svg class="i" style="left:406.5px;top:918.5px;color:#d1d5db;" width="13" height="13" viewBox="0 0 24 24" fill="none" stroke="#d1d5db" stroke-width="2.4" stroke-linecap="round" stroke-linejoin="round"><path d="M5 12h14"/><path d="M12 5v14"/></svg>
<div class="t" style="left:424px;top:915.0px;font-size:12.6px;font-weight:400;color:#f1f5f9;">New board</div>
<svg class="i" style="left:1915.5px;top:918.1px;color:#f1f5f9;" width="15" height="15" viewBox="0 0 24 24" fill="none" stroke="#f1f5f9" stroke-width="1.9" stroke-linecap="round" stroke-linejoin="round"><path d="M3 12h.01"/><path d="M3 18h.01"/><path d="M3 6h.01"/><path d="M8 12h13"/><path d="M8 18h13"/><path d="M8 6h13"/></svg>
<div class="t" style="left:1938.3px;top:914.9px;font-size:12.7px;font-weight:400;color:#f1f5f9;">1 column</div>
<svg class="i" style="left:1996.5px;top:917.6px;color:#f1f5f9;" width="14" height="14" viewBox="0 0 24 24" fill="none" stroke="#f1f5f9" stroke-width="2.1" stroke-linecap="round" stroke-linejoin="round"><path d="m6 9 6 6 6-6"/></svg>
<div class="b" style="left:339px;top:945px;width:1679px;height:300px;background:#1e293b;border:1px solid #475569;border-radius:7px;"></div>
<svg class="i" style="left:355px;top:963.6px;color:#f1f5f9;" width="12" height="12" viewBox="0 0 24 24" fill="none" stroke="#f1f5f9" stroke-width="2" stroke-linecap="round" stroke-linejoin="round"><path d="m6 9 6 6 6-6"/></svg>
<div class="t" style="left:375.6px;top:959.6px;font-size:13.5px;font-weight:700;color:#f1f5f9;">Backlog</div>
<svg class="i" style="left:437.5px;top:961.6px;color:#f1f5f9;" width="16" height="16" viewBox="0 0 24 24" fill="none" stroke="#f1f5f9" stroke-width="1.8" stroke-linecap="round" stroke-linejoin="round"><path d="M10 13a5 5 0 0 0 7.54.54l3-3a5 5 0 0 0-7.07-7.07l-1.72 1.71"/><path d="M14 11a5 5 0 0 0-7.54-.54l-3 3a5 5 0 0 0 7.07 7.07l1.71-1.71"/></svg>
<svg class="i" style="left:466px;top:962.1px;color:#f1f5f9;" width="15" height="15" viewBox="0 0 24 24" fill="none" stroke="#f1f5f9" stroke-width="1.8" stroke-linecap="round" stroke-linejoin="round"><polygon points="12 2 15.09 8.26 22 9.27 17 14.14 18.18 21.02 12 17.77 5.82 21.02 7 14.14 2 9.27 8.91 8.26 12 2"/></svg>
<div class="t" style="left:492.7px;top:959.6px;font-size:14.3px;font-weight:400;color:#94a3b8;">32 cards</div>
<div class="btn" style="left:562px;top:959px;width:98px;height:22px"></div>
<div class="t" style="left:570px;top:959.6px;font-size:12.3px;font-weight:400;color:#f1f5f9;">Open board</div>
<svg class="i" style="left:638px;top:963.1px;color:#f1f5f9;" width="13" height="13" viewBox="0 0 24 24" fill="none" stroke="#f1f5f9" stroke-width="2" stroke-linecap="round" stroke-linejoin="round"><path d="M5 12h14"/><path d="m12 5 7 7-7 7"/></svg>
<div class="b" style="left:1988px;top:969px;width:2px;height:2px;background:#f1f5f9"></div>
<div class="b" style="left:1992px;top:969px;width:2px;height:2px;background:#f1f5f9"></div>
<div class="b" style="left:1996px;top:969px;width:2px;height:2px;background:#f1f5f9"></div>
<div class="b" style="left:354px;top:992px;width:1650px;height:1px;background:#475569"></div>
<div class="b" style="left:339px;top:993px;width:1665px;height:121px;overflow:hidden">
<div style="position:absolute;left:-339px;top:-993px;width:2040px;height:1114px"><svg class="i" style="left:353.5px;top:1005.5px;color:#94a3b8;" width="14" height="14" viewBox="0 0 24 24" fill="none" stroke="#94a3b8" stroke-width="1.9" stroke-linecap="round" stroke-linejoin="round"><circle cx="12" cy="12" r="10" stroke-dasharray="4.3 3.55" transform="rotate(-80 12 12)"/></svg><div class="t hd" style="left:372px;top:1002.5px">Horror.Exchange<span class="cnt">0</span></div><svg class="i" style="left:362.1px;top:1033.8999999999999px;color:#d1d5db;" width="14" height="14" viewBox="0 0 24 24" fill="none" stroke="#d1d5db" stroke-width="2.6" stroke-linecap="round" stroke-linejoin="round"><path d="M5 12h14"/><path d="M12 5v14"/></svg><div class="t" style="left:379px;top:1031.5px;font-size:12.5px;font-weight:400;color:#f1f5f9;">Add card</div><svg class="i" style="left:599.5px;top:1005.5px;color:#94a3b8;" width="14" height="14" viewBox="0 0 24 24" fill="none" stroke="#94a3b8" stroke-width="1.9" stroke-linecap="round" stroke-linejoin="round"><circle cx="12" cy="12" r="10" stroke-dasharray="4.3 3.55" transform="rotate(-80 12 12)"/></svg><div class="t hd" style="left:618px;top:1002.5px">McAllen Garage Sales<span class="cnt">2</span></div><div class="card" style="left:600px;top:1029px;width:225px">Chat Agent</div><div class="card" style="left:600px;top:1062px;width:225px">Auto Grouping</div><svg class="i" style="left:608.1px;top:1098.8999999999999px;color:#d1d5db;" width="14" height="14" viewBox="0 0 24 24" fill="none" stroke="#d1d5db" stroke-width="2.6" stroke-linecap="round" stroke-linejoin="round"><path d="M5 12h14"/><path d="M12 5v14"/></svg><div class="t" style="left:625px;top:1096.5px;font-size:12.5px;font-weight:400;color:#f1f5f9;">Add card</div><svg class="i" style="left:846.5px;top:1005.5px;color:#94a3b8;" width="14" height="14" viewBox="0 0 24 24" fill="none" stroke="#94a3b8" stroke-width="1.9" stroke-linecap="round" stroke-linejoin="round"><circle cx="12" cy="12" r="10" stroke-dasharray="4.3 3.55" transform="rotate(-80 12 12)"/></svg><div class="t hd" style="left:865px;top:1002.5px">McAllen Next<span class="cnt">1</span></div><div class="card" style="left:847px;top:1029px;width:225px">Newsletter Platform</div><svg class="i" style="left:855.1px;top:1066.3999999999999px;color:#d1d5db;" width="14" height="14" viewBox="0 0 24 24" fill="none" stroke="#d1d5db" stroke-width="2.6" stroke-linecap="round" stroke-linejoin="round"><path d="M5 12h14"/><path d="M12 5v14"/></svg><div class="t" style="left:872px;top:1064.0px;font-size:12.5px;font-weight:400;color:#f1f5f9;">Add card</div><svg class="i" style="left:1093.5px;top:1005.5px;color:#94a3b8;" width="14" height="14" viewBox="0 0 24 24" fill="none" stroke="#94a3b8" stroke-width="1.9" stroke-linecap="round" stroke-linejoin="round"><circle cx="12" cy="12" r="10" stroke-dasharray="4.3 3.55" transform="rotate(-80 12 12)"/></svg><div class="t hd" style="left:1112px;top:1002.5px">Page Init Solutions<span class="cnt">5</span></div><div class="card" style="left:1094px;top:1029px;width:225px">Complete and publish landing pages</div><div class="card" style="left:1094px;top:1062px;width:225px">Business Ideas</div><div class="card" style="left:1094px;top:1094px;width:225px">Chat Agent</div><div class="card" style="left:1094px;top:1127px;width:225px">x</div><div class="card" style="left:1094px;top:1159px;width:225px">y</div><svg class="i" style="left:1339.5px;top:1005.5px;color:#94a3b8;" width="14" height="14" viewBox="0 0 24 24" fill="none" stroke="#94a3b8" stroke-width="1.9" stroke-linecap="round" stroke-linejoin="round"><circle cx="12" cy="12" r="10" stroke-dasharray="4.3 3.55" transform="rotate(-80 12 12)"/></svg><div class="t hd" style="left:1358px;top:1002.5px">Journalr<span class="cnt">0</span></div><svg class="i" style="left:1348.1px;top:1033.8999999999999px;color:#d1d5db;" width="14" height="14" viewBox="0 0 24 24" fill="none" stroke="#d1d5db" stroke-width="2.6" stroke-linecap="round" stroke-linejoin="round"><path d="M5 12h14"/><path d="M12 5v14"/></svg><div class="t" style="left:1365px;top:1031.5px;font-size:12.5px;font-weight:400;color:#f1f5f9;">Add card</div><svg class="i" style="left:1586.5px;top:1005.5px;color:#94a3b8;" width="14" height="14" viewBox="0 0 24 24" fill="none" stroke="#94a3b8" stroke-width="1.9" stroke-linecap="round" stroke-linejoin="round"><circle cx="12" cy="12" r="10" stroke-dasharray="4.3 3.55" transform="rotate(-80 12 12)"/></svg><div class="t hd" style="left:1605px;top:1002.5px">Playlistr<span class="cnt">0</span></div><svg class="i" style="left:1595.1px;top:1033.8999999999999px;color:#d1d5db;" width="14" height="14" viewBox="0 0 24 24" fill="none" stroke="#d1d5db" stroke-width="2.6" stroke-linecap="round" stroke-linejoin="round"><path d="M5 12h14"/><path d="M12 5v14"/></svg><div class="t" style="left:1612px;top:1031.5px;font-size:12.5px;font-weight:400;color:#f1f5f9;">Add card</div><svg class="i" style="left:1832.5px;top:1005.5px;color:#94a3b8;" width="14" height="14" viewBox="0 0 24 24" fill="none" stroke="#94a3b8" stroke-width="1.9" stroke-linecap="round" stroke-linejoin="round"><circle cx="12" cy="12" r="10" stroke-dasharray="4.3 3.55" transform="rotate(-80 12 12)"/></svg><div class="t hd" style="left:1851px;top:1002.5px">SelAromDotNet<span class="cnt">9</span></div><div class="card" style="left:1833px;top:1029px;width:225px">add proper 404 page with</div><div class="card" style="left:1833px;top:1062px;width:225px">Create/Import Blog Articles</div><div class="card" style="left:1833px;top:1094px;width:225px">Replace caching with memcached</div><div class="card" style="left:1833px;top:1127px;width:225px">a</div><div class="card" style="left:1833px;top:1159px;width:225px">b</div></div>
</div>
<div class="b" style="left:1962px;top:1036px;width:50px;height:50px;border-radius:11px;background:#f3f4f6"></div>
<svg class="i" style="left:1976px;top:1041.8px;color:#374151;" width="22" height="22" viewBox="0 0 24 24" fill="none" stroke="#374151" stroke-width="1.6" stroke-linecap="round" stroke-linejoin="round"><circle cx="12" cy="12" r="10"/><path d="M9.09 9a3 3 0 0 1 5.83 1c0 2-3 3-3 3"/><path d="M12 17h.01"/></svg>
<div class="t" style="left:1962px;top:1060.6px;font-size:10.8px;font-weight:400;color:#374151;width:50px;text-align:center;-webkit-text-stroke-width:0.2px">Help</div>
</body></html>
